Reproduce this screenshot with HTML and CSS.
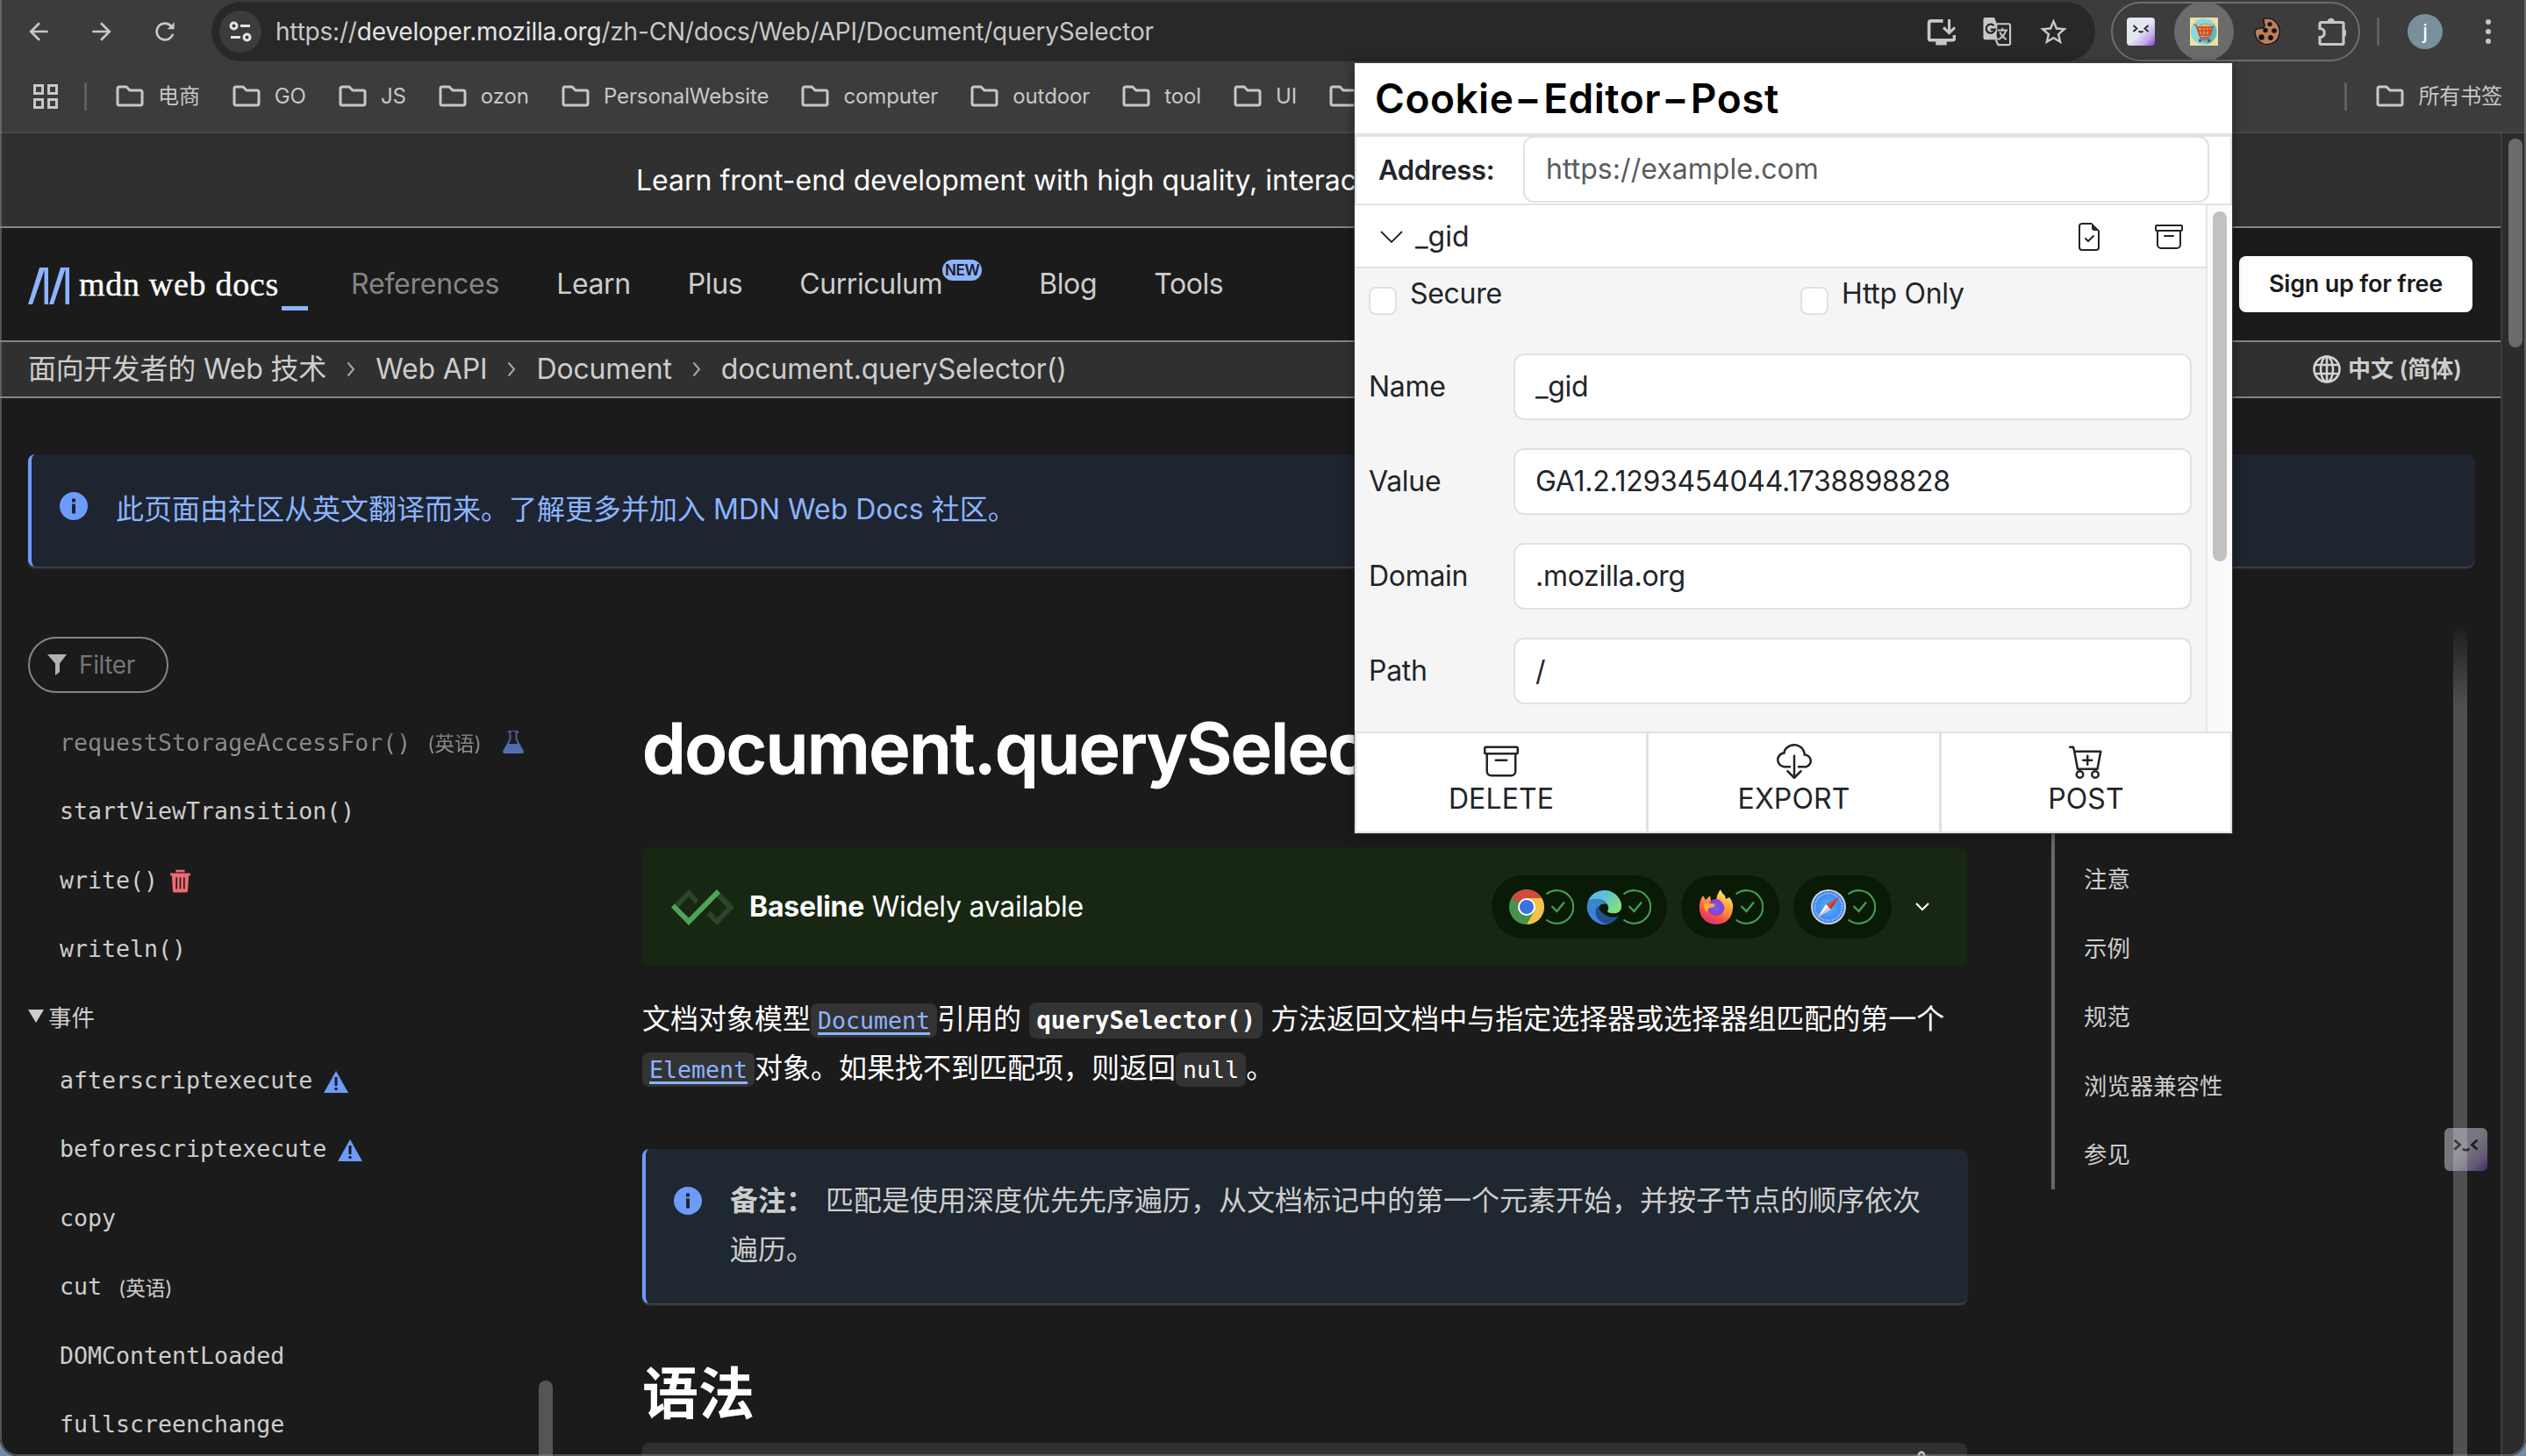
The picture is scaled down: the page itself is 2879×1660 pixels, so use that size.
FILE: index.html
```html
<!DOCTYPE html>
<html lang="zh-CN">
<head>
<meta charset="utf-8">
<title>document.querySelector()</title>
<link rel="stylesheet" href="styles.css">
</head>
<body>
<svg class="defs" width="0" height="0" aria-hidden="true">
  <defs>
    <linearGradient id="gPurple" x1="0" y1="0" x2="1" y2="1"><stop offset=".5" stop-color="#e4e6f2"/><stop offset=".78" stop-color="#c3a6ea"/><stop offset="1" stop-color="#7a3fc4"/></linearGradient>
    <linearGradient id="gEdgeTop" x1="0" y1="0" x2="1" y2=".6"><stop offset="0" stop-color="#5cb8ec"/><stop offset=".5" stop-color="#5cc3d0"/><stop offset="1" stop-color="#86e07a"/></linearGradient>
    <linearGradient id="gEdgeLeft" x1="0" y1="0" x2="0" y2="1"><stop offset="0" stop-color="#3a86c8"/><stop offset="1" stop-color="#3b82e0"/></linearGradient>
    <linearGradient id="gFox" x1=".8" y1="0" x2=".3" y2="1"><stop offset="0" stop-color="#fff36a"/><stop offset=".45" stop-color="#ff9a3c"/><stop offset=".75" stop-color="#f4503f"/><stop offset="1" stop-color="#e02a7d"/></linearGradient>
    <radialGradient id="gFoxCore"><stop offset="0" stop-color="#7a5cf5"/><stop offset="1" stop-color="#8a3bd0"/></radialGradient>
    <radialGradient id="gSafari"><stop offset="0" stop-color="#55b9f3"/><stop offset="1" stop-color="#3b7df0"/></radialGradient>
    <symbol id="folder" viewBox="0 0 32 26"><path d="M2 21V4a2 2 0 0 1 2-2h8l4 4h12a2 2 0 0 1 2 2v13a2 2 0 0 1-2 2H4a2 2 0 0 1-2-2z" fill="none" stroke="#c7c7c7" stroke-width="3"/></symbol>
    <symbol id="chev" viewBox="0 0 10 18"><path d="M1.500 1.500l6.500 7.500-6.500 7.500" fill="none" stroke="#a8a8a8" stroke-width="2"/></symbol>
    <symbol id="info" viewBox="0 0 32 32"><circle cx="16" cy="16" r="16" fill="#6d9bfa"/><rect x="14" y="7.500" width="4" height="4" fill="#1e2530"/><rect x="14" y="13.500" width="4" height="11" fill="#1e2530"/></symbol>
    <symbol id="check" viewBox="0 0 34 40"><path d="M2.500 5.500A18.800 18.800 0 1 1 2.500 34.500" fill="none" stroke="#479a55" stroke-width="2.200"/><path d="M8.500 19l6 6L23 14.500" fill="none" stroke="#479a55" stroke-width="2.400"/></symbol>
    <symbol id="warn" viewBox="0 0 28 25"><path d="M14 0l14 25H0z" fill="#6d9bfa"/><rect x="12.500" y="7" width="3" height="10" fill="#1b1b1b"/><rect x="12.500" y="19" width="3" height="3" fill="#1b1b1b"/></symbol>
    <symbol id="archive" viewBox="0 0 16 16"><path d="M0 2a1 1 0 0 1 1-1h14a1 1 0 0 1 1 1v2a1 1 0 0 1-1 1v7.500a2.500 2.500 0 0 1-2.500 2.500h-9A2.500 2.500 0 0 1 1 12.500V5a1 1 0 0 1-1-1zm2 3v7.500A1.500 1.500 0 0 0 3.500 14h9a1.500 1.500 0 0 0 1.500-1.500V5zm13-3H1v2h14zM5 7.500a.5.5 0 0 1 .5-.5h5a.5.5 0 0 1 0 1h-5a.5.5 0 0 1-.5-.5"/></symbol>
    <symbol id="face" viewBox="0 0 32 32"><rect width="32" height="32" rx="4" fill="url(#gPurple)"/><path d="M7.500 9l4 3.500-4 3.500M24.500 9l-4 3.500 4 3.500M13.500 15.500q2.500 2 5 0" fill="none" stroke="#22222e" stroke-width="1.800"/></symbol>
  </defs>
</svg>
<div class="window">
  <header class="toolbar">
    <nav class="nav-buttons">
      <svg viewBox="0 0 24 24"><path d="M20 11H7.830l5.590-5.590L12 4l-8 8 8 8 1.410-1.410L7.830 13H20v-2z"/></svg>
      <svg viewBox="0 0 24 24"><path d="M4 11h12.170l-5.590-5.590L12 4l8 8-8 8-1.410-1.410L16.170 13H4v-2z"/></svg>
      <svg viewBox="0 0 24 24"><path d="M17.650 6.350C16.200 4.900 14.210 4 12 4c-4.420 0-7.990 3.580-7.990 8s3.570 8 7.990 8c3.730 0 6.840-2.550 7.730-6h-2.080c-.82 2.330-3.040 4-5.650 4-3.310 0-6-2.690-6-6s2.690-6 6-6c1.660 0 3.140.69 4.220 1.780L14 10h6V4l-2.350 2.350z"/></svg>
    </nav>
    <div class="omnibox">
      <span class="site-info"><svg viewBox="0 0 26 26" fill="none" stroke="#e3e3e3" stroke-width="3"><circle cx="5.500" cy="6.500" r="3.500"/><path d="M13 6.500h11M2 19.500h11"/><circle cx="20.500" cy="19.500" r="3.500"/></svg></span>
      <span class="url"><span class="dim">https://</span>developer.mozilla.org<span class="dim">/zh-CN/docs/Web/API/Document/querySelector</span></span>
      <span class="omni-icons">
        <svg viewBox="0 0 32 32" fill="none" stroke="#c7c7c7" stroke-width="3.500"><path d="M18 3.800H4.500a2 2 0 0 0-2 2V23a2 2 0 0 0 2 2h24a2 2 0 0 0 2-2v-3.500"/><path d="M24.800 2v14M18.500 11l6.300 6 6.300-6" stroke-width="3"/><path d="M10 28h12" stroke-width="5"/></svg>
        <svg viewBox="0 0 34 34"><path d="M2.500 0h11l3.500 9-1 13 2 4H2.500a2 2 0 0 1-2-2V2a2 2 0 0 1 2-2z" fill="#c7c7c7"/><path d="M16 7.500h14.500a1.500 1.500 0 0 1 1.500 1.500v21.500a1.500 1.500 0 0 1-1.500 1.500H18l-3-6" fill="none" stroke="#c7c7c7" stroke-width="2.200"/><path d="M13 9.500a5.200 5.200 0 1 0 1.200 4.700H9" fill="none" stroke="#282828" stroke-width="2.400"/><path d="M17 15h12M23 12v3M27 15c-1 5-4 8-9 11M20 17c1 4 4 6 7.500 9" fill="none" stroke="#c7c7c7" stroke-width="2"/></svg>
        <svg viewBox="1.200 1.200 21.600 21.600"><path fill="#c7c7c7" d="M22 9.240l-7.190-.62L12 2 9.190 8.630 2 9.240l5.460 4.730L5.820 21 12 17.270 18.180 21l-1.630-7.030L22 9.240zM12 15.400l-3.760 2.270 1-4.280-3.320-2.880 4.380-.38L12 6.100l1.710 4.040 4.380.38-3.320 2.880 1 4.280L12 15.400z"/></svg>
      </span>
    </div>
    <div class="extensions">
      <svg class="ext" viewBox="0 0 32 32"><use href="#face"/></svg>
      <span class="ext-active"><svg class="ext" viewBox="0 0 32 32"><rect width="32" height="32" fill="#f0dfa4"/><circle cx="16" cy="16" r="15" fill="#86dbe0"/><path d="M11 26L27 7a15 15 0 0 1-7 23.500z" fill="#5db9b6"/><path d="M11 11q0-4 4-3 2-3 5 0 4-1 4 3z" fill="#edbd78" stroke="#a86a38" stroke-width=".6"/><path d="M8 11h18l-3 9H11z" fill="#e58a4a" stroke="#cf4327" stroke-width="1.600"/><path d="M4.500 8.500H7L12 23h10M14 12v7M18 12v7M22 12v7M9 15h15" fill="none" stroke="#cf4327" stroke-width="1.400"/><path d="M10 25h13" stroke="#cf4327" stroke-width="1.200"/><circle cx="11.500" cy="26.500" r="1.500" fill="#55425e"/><circle cx="22" cy="26.500" r="1.500" fill="#55425e"/></svg></span>
      <svg class="ext" viewBox="0 0 32 32"><path d="M11.500 1.500q5-1.500 10 .5 7 3.500 8.500 11.500 1 9-5 14-6 4.500-13 2.500-7-2.500-9-8.500-1-3-1-6 1.500-1 1.500-2.500 2.500.5 4-1 3 1 5-1 1.500-2.500-.5-5 1-2-.5-4.500z" fill="#b87f5c" stroke="#15110f" stroke-width="1.300"/><g fill="#15110f"><circle cx="19" cy="7.500" r="2.600"/><circle cx="14" cy="14.500" r="2.700"/><circle cx="24" cy="15" r="2.800"/><circle cx="9.500" cy="22.500" r="3.200"/><circle cx="20" cy="23" r="2.900"/></g></svg>
      <svg class="ext" viewBox="0 0 32 34"><path d="M3 6.500h24a1.500 1.500 0 0 1 1.500 1.500v22a1.500 1.500 0 0 1-1.500 1.500H3a1.500 1.500 0 0 1-1.500-1.500v-6.500c7 0 7-10 0-10V8A1.500 1.500 0 0 1 3 6.500z" fill="none" stroke="#c7c7c7" stroke-width="3.200" transform="translate(.5 0)"/><path d="M10.500 6a4.300 4.300 0 0 1 8.600 0zM29 14a4.600 4.600 0 0 1 0 9z" fill="#c7c7c7"/></svg>
    </div>
    <span class="bar-divider"></span>
    <span class="avatar">j</span>
    <span class="kebab"><i></i><i></i><i></i></span>
  </header>

  <div class="bookmarks">
    <svg class="apps" viewBox="0 0 28 28" fill="none" stroke="#c7c7c7" stroke-width="3"><path d="M1.500 1.500h9v9h-9zM17.500 1.500h9v9h-9zM1.500 17.500h9v9h-9zM17.500 17.500h9v9h-9z"/></svg>
    <span class="bm-divider"></span>
    <div class="bm-list">
      <span class="bm"><svg><use href="#folder"/></svg>电商</span>
      <span class="bm"><svg><use href="#folder"/></svg>GO</span>
      <span class="bm"><svg><use href="#folder"/></svg>JS</span>
      <span class="bm"><svg><use href="#folder"/></svg>ozon</span>
      <span class="bm"><svg><use href="#folder"/></svg>PersonalWebsite</span>
      <span class="bm"><svg><use href="#folder"/></svg>computer</span>
      <span class="bm"><svg><use href="#folder"/></svg>outdoor</span>
      <span class="bm"><svg><use href="#folder"/></svg>tool</span>
      <span class="bm"><svg><use href="#folder"/></svg>UI</span>
      <span class="bm"><svg><use href="#folder"/></svg></span>
    </div>
    <span class="bm-divider"></span>
    <span class="bm bm-all"><svg><use href="#folder"/></svg>所有书签</span>
  </div>

  <div class="viewport">
    <div class="page">
      <div class="banner">Learn front-end development with high quality, interactive</div>
      <div class="site-header">
        <span class="logo"><svg viewBox="0 0 48 42" fill="#8cb4ff"><path d="M0 42L13 0h6.500L5 42zM18.500 0H23v42h-4.500zM24 42L37 0h6L29 42zM42.500 0H47v42h-4.500z"/></svg><span class="logo-text">mdn web docs</span><i></i></span>
        <nav class="main-nav">
          <span class="current">References</span><span>Learn</span><span>Plus</span><span class="cur">Curriculum<sup>NEW</sup></span><span>Blog</span><span>Tools</span>
        </nav>
        <span class="signup">Sign up for free</span>
      </div>
      <div class="crumbs">
        <span>面向开发者的 Web 技术</span><svg><use href="#chev"/></svg><span>Web API</span><svg><use href="#chev"/></svg><span>Document</span><svg><use href="#chev"/></svg><span>document.querySelector()</span>
        <span class="lang"><svg viewBox="0 0 32 32" fill="none" stroke="#d4d4d4" stroke-width="2.600"><circle cx="16" cy="16" r="14.500"/><ellipse cx="16" cy="16" rx="7" ry="14.500"/><path d="M16 1.500v29M2.500 11h27M2.500 21h27"/></svg>中文 (简体)</span>
      </div>

      <div class="notice"><svg class="info"><use href="#info"/></svg><span>此页面由社区从英文翻译而来。了解更多并加入 MDN Web Docs 社区。</span></div>

      <div class="layout">
        <aside class="sidebar">
          <div class="side-list">
            <div class="filter"><svg viewBox="0 0 22 24"><path d="M0 0h22l-8 10.500V20l-5 4V10.500z" fill="#b3b3b3"/></svg>Filter</div>
            <div class="item faded">requestStorageAccessFor()<small>(英语)</small><svg class="flask" viewBox="0 0 24 26"><path d="M7 0h10v2h-1.500v8L22 22H2L8.500 10V2H7z" fill="none" stroke="#6d9bfa" stroke-width="2"/><path d="M6 15h12l6 9q0 2-2 2H2q-2 0-2-2z" fill="#6d9bfa"/></svg></div>
            <div class="item">startViewTransition()</div>
            <div class="item">write()<svg class="trash" viewBox="0 0 24 27"><path d="M8 3V1.500h8V3" fill="none" stroke="#ee6b74" stroke-width="2.500"/><path d="M0 4h24v3H0zM2 7h20l-1 18q0 2-2 2H5q-2 0-2-2z" fill="#ee6b74"/><path d="M7.500 9v14M12 9v14M16.500 9v14" stroke="#1b1b1b" stroke-width="1.700"/></svg></div>
            <div class="item">writeln()</div>
            <div class="group"><i></i>事件</div>
            <div class="item">afterscriptexecute<svg class="warn"><use href="#warn"/></svg></div>
            <div class="item">beforescriptexecute<svg class="warn"><use href="#warn"/></svg></div>
            <div class="item">copy</div>
            <div class="item">cut<small>(英语)</small></div>
            <div class="item">DOMContentLoaded</div>
            <div class="item">fullscreenchange</div>
          </div>
          <span class="side-thumb"></span>
        </aside>

        <main class="content">
          <h1>document.querySelector()</h1>
          <section class="baseline">
            <svg class="bl-icon" viewBox="0 0 72 41"><path d="M0 20.500L20 0l11.500 12-4 4.500L20 8.500 8.500 20.500l-4 4zM72 20.500L52 41 40.500 29l4-4.500 7.500 8 11.500-12L50 7l2-7z" fill="#2b4627"/><path d="M0 20.500l4-4L20 32.500 52 0l4 4.500L20 41z" fill="#4fa556"/></svg>
            <span class="bl-text"><strong>Baseline</strong> Widely available</span>
            <div class="browsers">
              <span class="pill">
                <svg class="br" viewBox="0 0 40 40"><circle cx="20" cy="20" r="20" fill="#48924c"/><path d="M20 20L2.700 10A20 20 0 0 1 37.300 10z" fill="#d24a3c"/><path d="M20 10h17.300A20 20 0 0 1 20 40l8.700-15z" fill="#f3c246"/><circle cx="20" cy="20" r="10" fill="#fff"/><circle cx="20" cy="20" r="8" fill="#3b72e0"/></svg><svg class="ck"><use href="#check"/></svg>
                <svg class="br br-next" viewBox="0 0 40 40"><path d="M2 13A20 20 0 0 1 40 17q1 8-6 10-8 1-10-2 3-5-1-9-7-8-21-3z" fill="url(#gEdgeTop)"/><path d="M2 13q9-5 17 0 4 3 4 4-7-2-9 4-2 9 5 16 5 3 8 2A20 20 0 0 1 2 13z" fill="url(#gEdgeLeft)"/><path d="M14 19q-5 3-3 11 4 9 14 9.500 7-2 12-9-8 3-15-1-7-4-8-10z" fill="#234f92"/></svg><svg class="ck"><use href="#check"/></svg>
              </span>
              <span class="pill">
                <svg class="br" viewBox="0 0 40 40"><path d="M1 24Q0 14 5 7l3 5 5-5 1 6q5-2 6-1 1-7 5-12 1 4 5 7l1 4 4-2q5 6 4 13Q37 39 20 40 4 39 1 24z" fill="url(#gFox)"/><circle cx="20" cy="20.500" r="9.500" fill="url(#gFoxCore)"/><path d="M6 16q6-1 13 1-1 4-6 4-3 1-3 5Q5 22 6 16z" fill="#fda63e"/><path d="M21 10q8 3 10 11 1 6-3 9 6-10-7-20z" fill="#ff9a3c"/></svg><svg class="ck"><use href="#check"/></svg>
              </span>
              <span class="pill">
                <svg class="br" viewBox="0 0 40 40"><circle cx="20" cy="20" r="20" fill="#cdd0d6"/><circle cx="20" cy="20" r="18" fill="url(#gSafari)"/><circle cx="20" cy="20" r="15.500" fill="none" stroke="#d6e8fc" stroke-width="2.200" stroke-dasharray=".8 1.630"/><path d="M32.500 8L17 17l3 3z" fill="#e24b3f"/><path d="M32.500 8L23 23l-3-3z" fill="#b93a34"/><path d="M7.500 32L17 17l3 3z" fill="#fff"/><path d="M7.500 32L23 23l-3-3z" fill="#c9ced6"/></svg><svg class="ck"><use href="#check"/></svg>
              </span>
              <svg class="expand" viewBox="0 0 16 10"><path d="M1 1l7 7 7-7" fill="none" stroke="#fff" stroke-width="2.200"/></svg>
            </div>
          </section>
          <p class="intro">文档对象模型<code class="link"><u>Document</u></code>引用的 <code class="strong">querySelector()</code> 方法返回文档中与指定选择器或选择器组匹配的第一个<br><code class="link"><u>Element</u></code>对象。如果找不到匹配项，则返回<code>null</code>。</p>
          <div class="note"><svg class="info"><use href="#info"/></svg><p><strong>备注：</strong>匹配是使用深度优先先序遍历，从文档标记中的第一个元素开始，并按子节点的顺序依次遍历。</p></div>
          <h2>语法</h2>
          <div class="code-head"><svg viewBox="0 0 24 28"><path d="M5 8h14v18H5zM9 8V5q3-5 6 0v3" fill="none" stroke="#cdcdcd" stroke-width="2.500"/></svg></div>
        </main>

        <div class="right">
          <ul class="toc"><li>注意</li><li>示例</li><li>规范</li><li>浏览器兼容性</li><li>参见</li></ul>
          <span class="track"></span>
        </div>
      </div>
      <svg class="ghost" viewBox="0 0 32 32"><use href="#face"/></svg>
    </div>
    <div class="page-scroll"><span></span></div>
  </div>

  <section class="popup">
    <h3>Cookie<span class="dash">-</span>Editor<span class="dash">-</span>Post</h3>
    <div class="address">Address:<span class="input">https://example.com</span></div>
    <div class="pop-body">
      <div class="cookie">
        <div class="cookie-head">
          <svg class="caret" viewBox="0 0 26 14"><path d="M1 1l12 12L25 1" fill="none" stroke="#212529" stroke-width="1.800"/></svg>
          <span>_gid</span>
          <svg class="file" viewBox="0 0 16 16"><path d="M10.854 7.854a.5.5 0 0 0-.708-.708L7.500 9.793 6.354 8.646a.5.5 0 1 0-.708.708l1.500 1.500a.5.5 0 0 0 .708 0z"/><path d="M14 14V4.500L9.500 0H4a2 2 0 0 0-2 2v12a2 2 0 0 0 2 2h8a2 2 0 0 0 2-2M9.500 3A1.500 1.500 0 0 0 11 4.500h2V14a1 1 0 0 1-1 1H4a1 1 0 0 1-1-1V2a1 1 0 0 1 1-1h5.500z"/></svg>
          <svg class="arch"><use href="#archive"/></svg>
        </div>
        <div class="fields">
          <div class="checks"><span class="check"><i></i>Secure</span><span class="check"><i></i>Http Only</span></div>
          <div class="field"><label>Name</label><span class="input">_gid</span></div>
          <div class="field"><label>Value</label><span class="input">GA1.2.1293454044.1738898828</span></div>
          <div class="field"><label>Domain</label><span class="input">.mozilla.org</span></div>
          <div class="field"><label>Path</label><span class="input">/</span></div>
        </div>
      </div>
      <div class="pop-scroll"><span></span></div>
    </div>
    <div class="actions">
      <span><svg><use href="#archive"/></svg>DELETE</span>
      <span><svg viewBox="0 0 16 16"><path d="M4.406 1.342A5.530 5.530 0 0 1 8 0c2.690 0 4.923 2 5.166 4.579C14.758 4.804 16 6.137 16 7.773 16 9.569 14.502 11 12.687 11H10a.5.5 0 0 1 0-1h2.688C13.979 10 15 8.988 15 7.773c0-1.216-1.020-2.228-2.313-2.228h-.5v-.5C12.188 2.825 10.328 1 8 1a4.530 4.530 0 0 0-2.941 1.100c-.757.652-1.153 1.438-1.153 2.055v.448l-.445.049C2.064 4.805 1 5.952 1 7.318 1 8.785 2.230 10 3.781 10H6a.5.5 0 0 1 0 1H3.781C1.708 11 0 9.366 0 7.318c0-1.763 1.266-3.223 2.942-3.593.143-.863.698-1.723 1.464-2.383"/><path d="M7.646 15.854a.5.5 0 0 0 .708 0l3-3a.5.5 0 0 0-.708-.708L8.500 14.293V5.500a.5.5 0 0 0-1 0v8.793l-2.146-2.147a.5.5 0 0 0-.708.708z"/></svg>EXPORT</span>
      <span><svg viewBox="0 0 16 16"><path d="M9 5.500a.5.5 0 0 0-1 0V7H6.500a.5.5 0 0 0 0 1H8v1.500a.5.5 0 0 0 1 0V8h1.500a.5.5 0 0 0 0-1H9z"/><path d="M.5 1a.5.5 0 0 0 0 1h1.110l.401 1.607 1.498 7.985A.5.5 0 0 0 4 12h1a2 2 0 1 0 0 4 2 2 0 0 0 0-4h7a2 2 0 1 0 0 4 2 2 0 0 0 0-4h1a.5.5 0 0 0 .491-.408l1.500-8A.5.5 0 0 0 14.500 3H2.890l-.405-1.621A.5.5 0 0 0 2 1zm3.915 10L3.102 4h10.796l-1.313 7zM6 14a1 1 0 1 1-2 0 1 1 0 0 1 2 0m7 0a1 1 0 1 1-2 0 1 1 0 0 1 2 0"/></svg>POST</span>
    </div>
  </section>
</div>
</body>
</html>
```
FILE: styles.css
```css
* { box-sizing: border-box; }
body { margin: 0; width: 2879px; height: 1660px; overflow: hidden; background: #6f8ba6; font-family: Inter, "Noto Sans CJK SC", sans-serif; }
svg { display: block; flex: none; }
.defs { position: absolute; }
h1, h2, h3, p, ul { margin: 0; padding: 0; }
.window { position: relative; display: flex; flex-direction: column; height: 1660px; overflow: hidden; background: #3c3c3c; border-radius: 0 0 20px 20px; }
.window::after { content: ""; position: absolute; inset: -4px 0 0 0; border: 2px solid rgba(140,140,140,.5); border-radius: 0 0 20px 20px; pointer-events: none; }

/* Browser toolbar */
.toolbar { display: flex; align-items: center; height: 72px; flex: none; }
.nav-buttons { display: flex; gap: 40px; width: 241px; padding-left: 28px; flex: none; }
.nav-buttons svg { width: 32px; height: 32px; fill: #c7c7c7; }
.omnibox { display: flex; align-items: center; width: 2147px; height: 68px; padding-left: 9px; border-radius: 34px; background: #282828; flex: none; }
.site-info { display: grid; place-items: center; width: 48px; height: 48px; border-radius: 50%; background: #3c3c3c; }
.site-info svg { width: 26px; height: 26px; }
.url { margin-left: 16px; font-size: 28px; line-height: 40px; letter-spacing: -.2px; color: #e3e3e3; white-space: nowrap; }
.dim { color: #c7c7c7; }
.omni-icons { display: flex; gap: 31px; margin-left: auto; margin-right: 31px; }
.omni-icons svg { width: 33px; height: 33px; }
.extensions { display: flex; align-items: center; width: 284px; height: 68px; margin-left: 18px; padding-left: 16px; border: 2px solid #6e6e6e; border-radius: 34px; flex: none; }
.ext { width: 32px; height: 32px; }
.ext-active { display: grid; place-items: center; width: 68px; height: 68px; margin: 0 22px; border-radius: 50%; background: #6b6b6b; }
.ext-active + .ext + .ext { margin-left: 42px; height: 34px; }
.bar-divider { width: 3px; height: 32px; margin-left: 19px; background: #5f5f5f; }
.avatar { display: grid; place-items: center; width: 40px; height: 40px; margin-left: 32px; border-radius: 50%; background: #78909c; color: #fff; font: 24px Roboto, sans-serif; }
.kebab { display: grid; gap: 5px; margin-left: 49px; }
.kebab i { width: 6px; height: 6px; border-radius: 50%; background: #c7c7c7; }

/* Bookmarks bar */
.bookmarks { display: flex; align-items: center; height: 80px; flex: none; padding: 0 27px 2px 38px; border-bottom: 2px solid #474747; font-size: 24px; line-height: 30px; letter-spacing: -.1px; color: #c7c7c7; }
.apps { width: 28px; height: 28px; }
.bm-divider { width: 3px; height: 32px; margin-left: 30px; background: #5f5f5f; }
.bm-list { display: flex; gap: 37px; margin-left: 33px; flex: 1; }
.bm { display: flex; align-items: center; gap: 16px; white-space: nowrap; }
.bm svg { width: 32px; height: 26px; }
.bm-all { margin-left: 33px; }

/* Page chrome */
.viewport { display: flex; flex: 1; min-height: 0; }
.page { position: relative; width: 2850px; overflow: hidden; background: #1b1b1b; flex: none; }
.page-scroll { flex: 1; padding: 6px 0 0 7px; border-left: 2px solid #3d3d3d; background: #2c2c2c; }
.page-scroll span { display: block; width: 16px; height: 238px; border-radius: 8px; background: #6b6b6b; }
.banner { height: 108px; padding-left: 725px; border-bottom: 2px solid #858585; background: #303030; color: #fff; font-size: 32px; line-height: 107px; white-space: nowrap; }
.site-header { display: flex; align-items: center; height: 130px; padding: 0 32px; border-bottom: 2px solid #858585; color: #cdcdcd; font-size: 32px; line-height: 40px; }
.logo { display: flex; align-items: center; width: 368px; }
.logo svg { width: 48px; height: 42px; margin-top: 4px; }
.logo-text { margin-left: 10px; color: #fff; font: 38px/44px "Liberation Serif", serif; letter-spacing: .7px; -webkit-text-stroke: .4px #fff; }
.logo i { width: 30px; height: 5px; margin: 54px 0 0 3px; background: #8cb4ff; }
.main-nav { display: flex; gap: 65px; letter-spacing: -.4px; }
.current { color: #858585; letter-spacing: -.2px; }
.cur { position: relative; margin-right: 45px; }
.cur sup { position: absolute; left: 100%; top: -8px; width: 45px; height: 24px; border-radius: 12px; background: #8cb4ff; color: #1b1b1b; font-size: 17px; font-weight: 600; line-height: 24px; text-align: center; }
.signup { width: 266px; height: 64px; margin-left: auto; border-radius: 8px; background: #fff; color: #1b1b1b; font-size: 27px; font-weight: 600; line-height: 64px; letter-spacing: -.2px; text-align: center; }
.crumbs { display: flex; align-items: center; height: 64px; padding: 0 44px 0 32px; border-bottom: 2px solid #858585; background: #303030; color: #cdcdcd; font-size: 32px; line-height: 40px; letter-spacing: -.15px; }
.crumbs > svg { width: 10px; height: 18px; margin: 0 23px; }
.lang { display: flex; align-items: center; gap: 8px; margin-left: auto; font-size: 26px; font-weight: 600; letter-spacing: 0; }
.lang svg { width: 32px; height: 32px; }

.notice { display: flex; width: 2788px; height: 128px; margin: 64px 0 70px 32px; padding: 43px 32px 0; border-left: 4px solid #6d9bfa; border-radius: 8px; background: #1e2430; box-shadow: 0 2px 2px #474747; color: #8cb4ff; font-size: 32px; line-height: 40px; white-space: nowrap; }
.info { width: 32px; height: 32px; margin-right: 32px; }

.layout { display: grid; grid-template-columns: 700px 1510px 1fr; height: 944px; padding-left: 32px; }

/* Sidebar */
.sidebar { display: flex; }
.side-list { width: 582px; padding-top: 10px; color: #cdcdcd; font: 26.600px "DejaVu Sans Mono", "Noto Sans CJK SC", monospace; }
.filter { display: flex; align-items: center; width: 160px; height: 64px; margin-bottom: 17px; padding-left: 20px; border: 2px solid #858585; border-radius: 32px; color: #757575; font: 28px Inter, sans-serif; letter-spacing: -.4px; }
.filter svg { width: 22px; height: 24px; margin-right: 14px; }
.item { display: flex; align-items: center; height: 78.500px; padding-left: 36px; white-space: nowrap; }
.item small { margin-left: 19px; font: 22.500px Inter, "Noto Sans CJK SC", sans-serif; }
.faded { -webkit-mask-image: linear-gradient(rgba(0,0,0,.3), rgba(0,0,0,.9)); mask-image: linear-gradient(rgba(0,0,0,.3), rgba(0,0,0,.9)); }
.flask { width: 24px; height: 26px; margin-left: 24px; }
.trash { width: 23px; height: 27px; margin: 3px 0 0 14px; }
.warn { width: 28px; height: 25px; margin: 4px 0 0 13px; }
.group { display: flex; align-items: center; gap: 5px; height: 71px; padding-top: 4px; font: 26.400px Inter, "Noto Sans CJK SC", sans-serif; }
.group i { border: 9px solid transparent; border-top: 15px solid #cdcdcd; border-bottom: 0; }
.side-thumb { width: 16px; height: 120px; margin-top: 858px; border-radius: 8px; background: #555; }

/* Article */
h1 { margin-top: 87px; color: #fff; font-size: 80px; font-weight: 600; line-height: 100px; letter-spacing: -1.600px; -webkit-text-stroke: .8px #fff; white-space: nowrap; }
.baseline { display: flex; align-items: center; height: 136px; margin-top: 63px; padding: 0 43px 0 33px; border-radius: 8px; background: #172713; color: #fff; font-size: 32px; line-height: 40px; letter-spacing: -.25px; }
.bl-icon { width: 72px; height: 41px; margin-right: 17px; }
.bl-text strong { font-weight: 700; }
.browsers { display: flex; align-items: center; gap: 16px; margin-left: auto; }
.pill { display: flex; align-items: center; height: 72px; padding: 0 18px 0 20px; border-radius: 36px; background: #091a07; }
.br { width: 40px; height: 40px; }
.br-next { margin-left: 14px; }
.ck { width: 34px; height: 40px; }
.expand { width: 16px; height: 10px; margin-left: 11px; }
.intro { margin-top: 32px; color: #fff; font-size: 32px; line-height: 56px; white-space: nowrap; }
code { padding: 4px 8px; border-radius: 8px; background: #333; font: 26.600px "DejaVu Sans Mono", monospace; }
.link { color: #8cb4ff; }
.link u { text-decoration-thickness: 3px; text-underline-offset: 4px; }
.strong { font-weight: 700; font-size: 27.700px; }
.note { display: flex; height: 176px; margin-top: 64px; padding: 31px 32px 0 32px; border-left: 4px solid #6d9bfa; border-radius: 8px; background: #1f2730; box-shadow: 0 2px 2px #474747; color: #cdcdcd; font-size: 32px; line-height: 56px; }
.note .info { margin-top: 12px; }
.note strong { margin-right: 13px; }
h2 { margin-top: 63px; color: #fff; font-size: 64px; line-height: 80px; }
.code-head { display: flex; justify-content: flex-end; height: 40px; margin-top: 16px; padding: 8px 40px 0 0; border-radius: 8px 8px 0 0; background: #303030; }
.code-head svg { width: 24px; height: 28px; }
.right { display: flex; justify-content: space-between; padding: 0 38px 0 96px; }
.toc { height: 472px; margin-top: 168px; padding: 79px 0 0 33px; border-left: 4px solid #696969; list-style: none; color: #cdcdcd; font-size: 26.400px; line-height: 78.600px; }
.track { width: 16px; border-radius: 8px 8px 0 0; background: linear-gradient(#1f1f1f, #505050 90px); }
.ghost { position: absolute; left: 2786px; top: 1134px; width: 49px; height: 49px; opacity: .45; }

/* Extension popup */
.popup { position: absolute; left: 1544px; top: 72px; width: 1000px; height: 878px; background: #fff; color: #212529; box-shadow: 0 2px 12px rgba(0,0,0,.5), 0 0 1px 1px rgba(90,90,90,.6); font-size: 32px; line-height: 40px; letter-spacing: -.3px; }
h3 { height: 84px; padding-left: 23px; border-bottom: 4px solid #e2e4e8; color: #000; font-size: 46px; font-weight: 600; line-height: 80px; letter-spacing: .5px; }
.dash { display: inline-block; margin: 0 6px; transform: scaleX(1.450); }
.address { display: flex; align-items: center; height: 78px; padding-left: 25px; border: 2px solid #dee2e6; border-top: 0; font-size: 31px; font-weight: 600; }
.input { display: flex; align-items: center; width: 773px; height: 76px; padding-left: 23px; border: 2px solid #dee2e6; border-radius: 12px; background: #fff; }
.address .input { position: absolute; left: 192px; top: 83px; width: 782px; padding-left: 24px; font-size: 32px; font-weight: 400; letter-spacing: .05px; color: #595c5f; }
.pop-body { display: flex; height: 600px; }
.cookie { width: 972px; border-right: 2px solid #e4e6e8; background: #f5f5f5; }
.cookie-head { display: flex; align-items: center; height: 72px; padding: 1px 26px 0 29px; border-bottom: 2px solid #dee2e6; background: #fff; letter-spacing: 0; }
.caret { width: 26px; height: 14px; margin-right: 14px; }
.file { width: 32px; height: 32px; margin-left: auto; }
.arch { width: 32px; height: 32px; margin-left: 59px; }
.fields { padding: 7px 16px 0; }
.checks { display: flex; height: 90px; }
.check { display: flex; width: 492px; flex: none; line-height: 44px; }
.check i { width: 32px; height: 32px; margin: 14px 15px 0 0; border: 2px solid #dee2e6; border-radius: 8px; background: #fff; }
.field { display: flex; align-items: center; height: 76px; margin-bottom: 32px; }
.field label { width: 165px; }
.pop-scroll { flex: 1; padding: 7px 0 0 6px; background: #fafafa; }
.pop-scroll span { display: block; width: 16px; height: 399px; border-radius: 8px; background: #c1c1c1; }
.actions { display: grid; grid-template-columns: 333px 334px 1fr; height: 116px; border: 2px solid #dee2e6; background: #fff; letter-spacing: .1px; }
.actions span { display: flex; flex-direction: column; align-items: center; padding-top: 12px; border-right: 3px solid #dee2e6; }
.actions span:last-child { border-right: 0; }
.actions svg { width: 40px; height: 40px; margin-bottom: 3px; }
.popup svg { fill: #212529; }
```
